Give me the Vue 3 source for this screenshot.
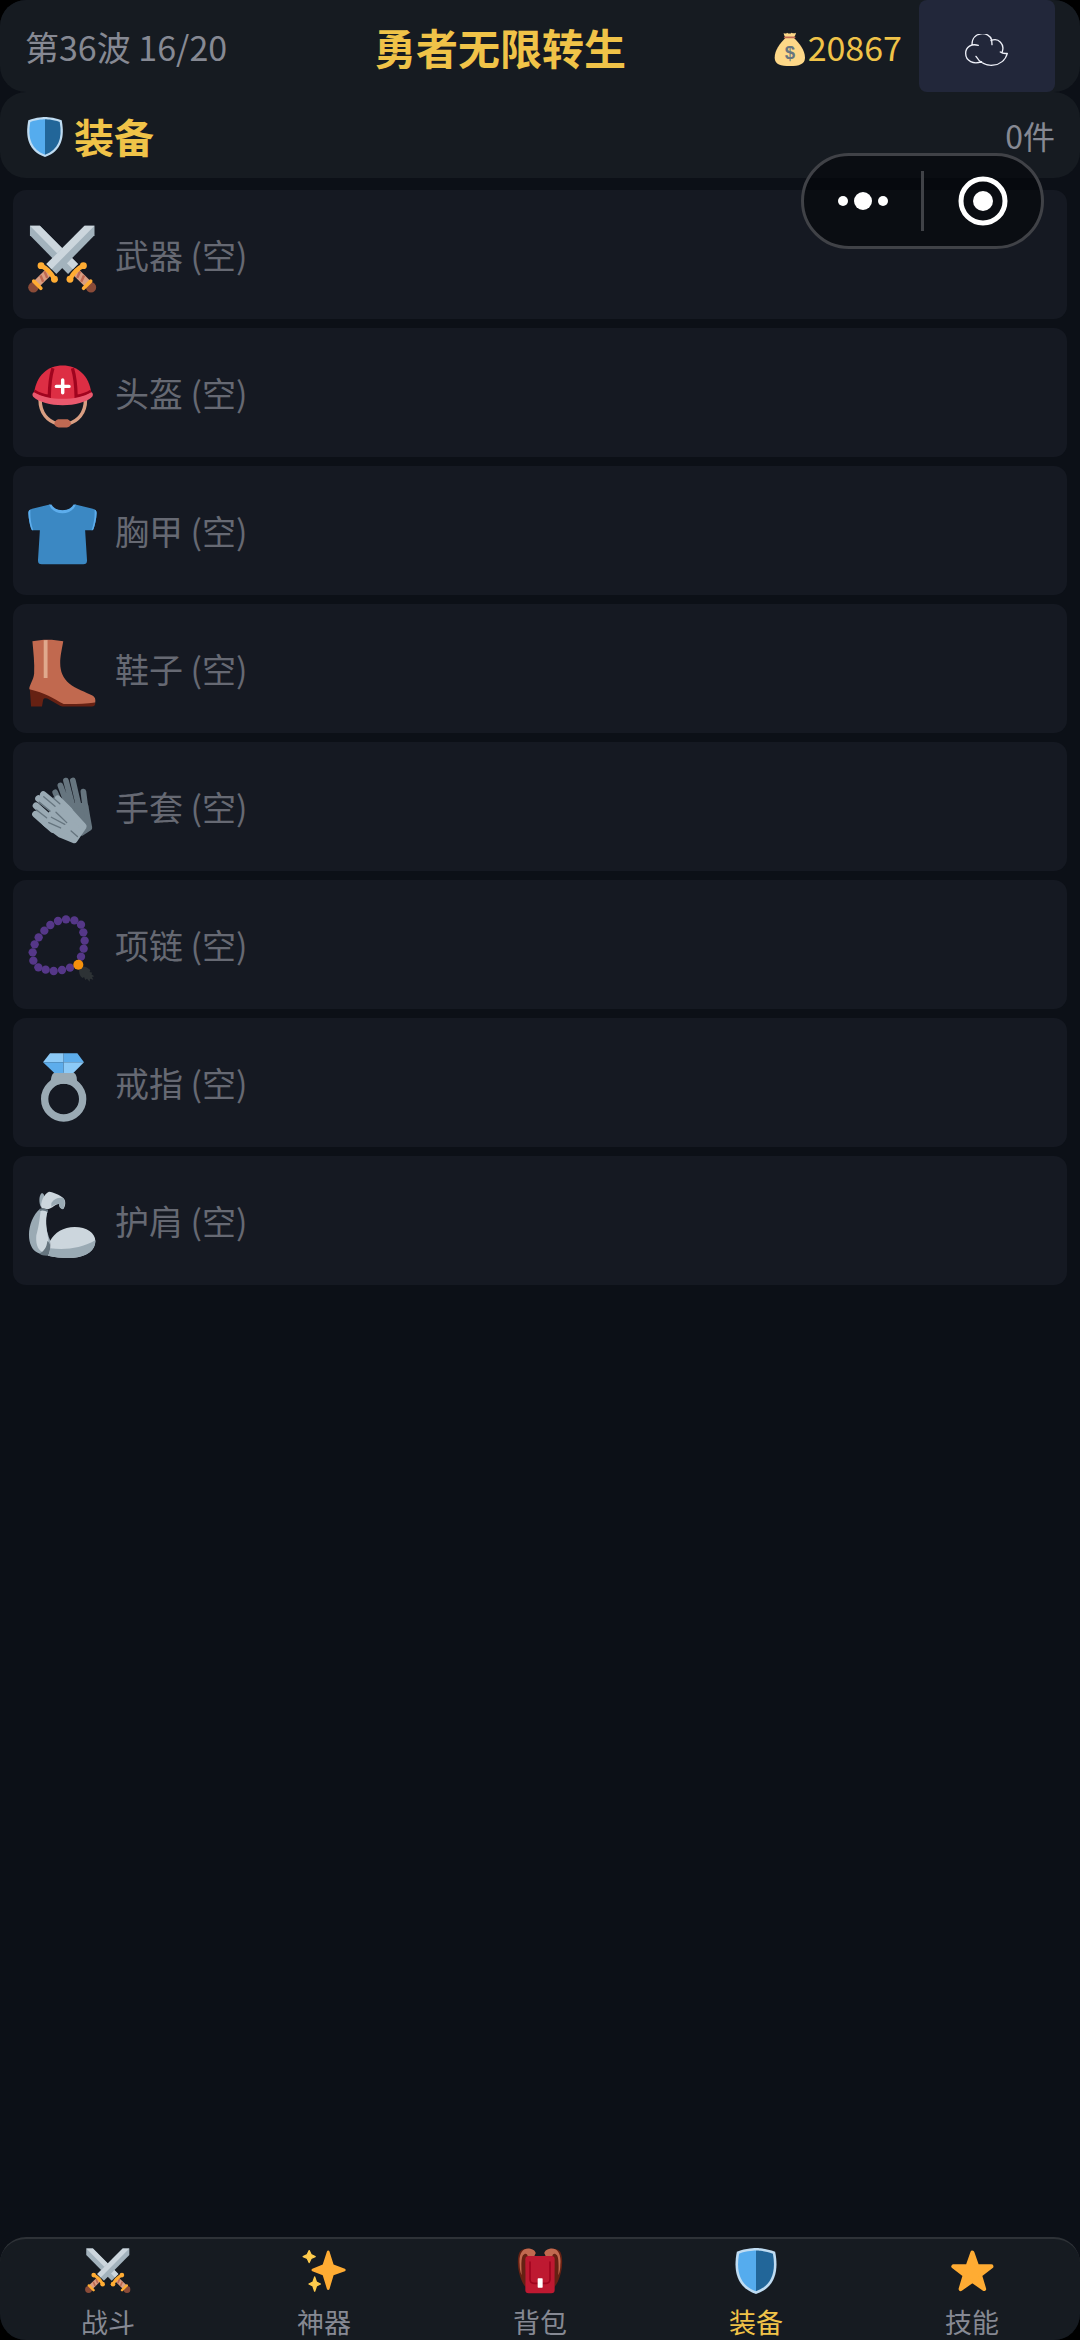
<template>
  <div class="game">
    <!-- Shared symbols, used at more than one size -->
    <svg class="defs" aria-hidden="true">
      <symbol id="sword" viewBox="0 0 36 36">
        <path d="M34.7.4h-5.2L9.600 20.400l5.200 5.200L34.700 5.400z" fill="#a3b3bd" />
        <path d="M34.700.4h-5.200L9.600 20.400l2.700 2.700z" fill="#ccd6dd" />
        <path d="M9 23.400l2.900 2.900-7.100 7-2.900-2.900z" fill="#d99e82" />
        <path d="M8.600 24.200l1.400 3.400M6.500 26.400l1.400 3.200" stroke="#bf6952" stroke-width="1.300" />
        <circle cx="2.800" cy="32.500" r="2.700" fill="#8a4b38" />
        <path d="M3 29.300l3.700 3.700" stroke="#ffac33" stroke-width="1.900" stroke-linecap="round" />
        <path d="M6.800 21.200q4.600 2.200 7 7.100" fill="none" stroke="#ffac33" stroke-width="2.400" />
        <circle cx="6.800" cy="21.200" r="1.800" fill="#ffac33" />
        <circle cx="13.800" cy="28.300" r="1.800" fill="#ffac33" />
      </symbol>
      <symbol id="i-swords" viewBox="0 0 36 36">
        <g transform="translate(35.700 0) scale(-1 1)">
          <use href="#sword" width="36" height="36" />
        </g>
        <use href="#sword" width="36" height="36" />
      </symbol>
      <symbol id="i-shield" viewBox="0 0 36 36">
        <path d="M33 3c-7-3-15-3-15-3S10 0 3 3C0 18 3 31 18 36c15-5 18-18 15-33z" fill="#bfdcf2" />
        <path d="M18 33.884C6.412 29.729 1.961 19.831 4.76 4.444 11.063 2.029 17.928 2 18 2z" fill="#55acee" />
        <path d="M31.24 4.445C25.027 2.066 18.136 2 18 2v31.884c11.588-4.155 16.039-14.053 13.24-29.439z" fill="#226699" />
      </symbol>
      <symbol id="i-sparkles" viewBox="0 0 36 36">
        <path d="M34.3 16.2l-8.8-3.2-3.2-10.3c-.3-1-1.7-1-2 0L17 13l-8.1 3.2c-.9.3-.9 1.6 0 2L17 21.4l3.3 10.7c.3 1 1.700 1 2 0l3.200-10.700 8.800-3.200c.9-.4.9-1.700 0-2z" fill="#ffac33" />
        <path d="M6.400 2l1.500 3.200 3.200 1.500-3.200 1.500-1.500 3.200-1.500-3.200-3.200-1.500 3.200-1.500zM10.700 22.600l1.400 4.100 3.100 1.500-3.100 1.500-1.400 4.100-1.400-4.100-3.100-1.500 3.100-1.500z" fill="#ffcc4d" stroke="#ffcc4d" stroke-linejoin="round" />
      </symbol>
      <symbol id="i-backpack" viewBox="0 0 138 138">
        <path d="M26 118C4 90-4 36 8 12 18-2 46 0 56 14l-8 18H34c-10 18-8 48-8 86z" fill="#662113" />
        <path d="M8 50C4 16 18-2 40 2c10 2 16 8 16 14l-8 16-16-8c-2-8-8-10-14-2-4 8-6 18-4 60C9 70 8 60 8 50z" fill="#c1694f" />
        <path d="M112 118c22-28 30-82 18-106C120-2 92 0 82 14l8 18h14c10 18 8 48 8 86z" fill="#662113" />
        <path d="M130 50c4-34-10-52-32-48-10 2-16 8-16 14l8 16 16-8c2-8 8-10 14-2 4 8 6 18 4 60 5-12 6-22 6-32z" fill="#c1694f" />
        <rect x="25" y="24" width="88" height="112" rx="10" fill="#be1931" />
        <path d="M39 42v52q0 12 12 12h36q12 0 12-12V42" fill="none" stroke="#a0041e" stroke-width="5" stroke-linecap="round" />
        <rect x="62" y="91" width="15" height="28" rx="2" fill="#fff" />
      </symbol>
      <symbol id="i-star" viewBox="0 0 36 36">
        <path d="M18.300 3.600l3.700 10.600 11.200.2-8.900 6.900 3.200 10.800-9.200-6.400-9.200 6.400 3.200-10.800-8.900-6.900 11.200-.2z" fill="#ffac33" stroke="#ffac33" stroke-width="3.200" stroke-linejoin="round" />
      </symbol>
      <symbol id="i-helmet" viewBox="0 0 36 36">
        <path d="M6.300 19c0 7.400 4.200 11.400 9 12.700M30 19c0 7.400-4.200 11.400-9 12.700" fill="none" stroke="#d99e82" stroke-width="1.800" />
        <path d="M16 29.400h4.300c1 0 2.100 1.200 2.100 2.200 0 1.300-1 2-2.100 2H16c-1.200 0-2.200-.7-2.200-2 0-1 1.200-2.200 2.200-2.200z" fill="#bf6952" />
        <path d="M3.200 15.600C4.300 6.500 10.400 1.300 18.100 1.300s13.800 5.200 14.900 14.300L28 20H8z" fill="#dd2e44" />
        <path d="M13 2.700c-1.300 4.300-1.800 9.300-1.900 14.700-3.500-.6-5.800-1.400-7.800-2.800M23.200 2.700c1.300 4.300 1.800 9.300 1.900 14.700 3.500-.6 5.800-1.400 7.800-2.800" fill="none" stroke="#a0041e" stroke-width="1.700" />
        <path d="M3.100 15.300c-.9.400-1 1.600-.4 2.300 3 2.900 9 4.400 15.400 4.400s12.400-1.500 15.400-4.400c.6-.7.500-1.900-.4-2.300-4 2.400-9 3.400-15 3.400s-11-1-15-3.400z" fill="#ea596e" />
        <path d="M18.100 8.900v6.600M14.800 12.200h6.600" stroke="#fff" stroke-width="1.800" stroke-linecap="round" />
      </symbol>
      <symbol id="i-shirt" viewBox="0 0 36 36">
        <path d="M11.300 1.800L2.200 4C.8 4.400.2 5 .2 6.400c.1 3 .7 5.800 1.500 8.200.2.500.5.700 1 .7L6.200 15.200 5.200 31c0 1.400.7 2 2 2h21.600c1.300 0 2-.6 2-2l-1-15.800 3.400.1c.5 0 .8-.2 1-.7.800-2.400 1.500-5.200 1.600-8.200 0-1.400-.6-2-2-2.400l-9.100-2.200C22 6 14 6 11.300 1.800z" fill="#3b88c3" />
        <path d="M11.100 1.800h1.100c2.100 4 9.500 4 11.600 0h1.100c-1.800 6.200-12 6.200-13.800 0zM1.300 4.400C.5 4.800.1 5.400.2 6.400c.1 3 .7 5.800 1.500 8.200.2.500.5.700 1 .7C1.500 11.600 1 8 1.300 4.400zM34.700 4.400c.8.4 1.200 1 1.100 2-.1 3-.8 5.800-1.600 8.200-.2.500-.5.700-1 .7 1.200-3.700 1.800-7.300 1.500-10.900z" fill="#5dadec" />
      </symbol>
      <symbol id="i-boot" viewBox="0 0 36 36">
        <path d="M.9 25.500L1.600 35.200h5.700l.6-3.400c.2-1.200 1.900-1 3.100-.2l5.500 3.100c.7.400 1.200.5 2 .5h14.800c1.300 0 1.900-.7 1.800-1.900z" fill="#662113" />
        <path d="M2.300 1.200c5-1.100 11-1.100 16.100 0-.9 5-1.600 8-1.600 11.300 0 4.500 1.500 8 4.700 10.700 3.500 3 8.500 4.300 12.100 6.300 1.400.8 1.700 1.800 1.500 3.600-6 .8-12 1-16.500.8C13 31 9 28 .7 26.200.6 24 2.900 21.500 3.200 18c.3-5.500-.4-11-.9-16.800z" fill="#c1694f" />
        <path d="M8.200.6l2-.1v19.800h-2z" fill="#e0a98d" />
      </symbol>
      <symbol id="i-gloves" viewBox="0 0 36 36">
        <g stroke="#66757f" stroke-width="3" stroke-linecap="round" stroke-linejoin="round" fill="#66757f">
          <path d="M14.200 8l4 9M16.900 4.400l4 11M19.800 1.900l3.400 13M23.400 1.800l3 13M28.900 7.600l1 8" />
          <path d="M18 15h12l1 6 1 5.500-4 2.600L18 20z" />
        </g>
        <g stroke="#9aaab4" stroke-width="3.500" stroke-linecap="round" stroke-linejoin="round" fill="#9aaab4">
          <path d="M3.900 19.400l9 8M4.200 15l10 9M5.500 11.200l12 9M8 9.200l11 9M15.500 11.400l6 6" />
          <path d="M14 17l6-1 8.900 9.800-4.800 7-7-2.800-8-6z" />
        </g>
        <path d="M4.500 17.200l5.200 4.100M5.800 13.100l5.700 4.700M8.200 10.300l5.900 5M14.600 18.400l5.600 5.400M12.200 21l7 3.700M10.800 23.800l6.200 2.800M22.500 28.200l3.300 2.900M13.200 11l3.400 3" stroke="#66757f" stroke-width=".7" stroke-linecap="round" />
      </symbol>
      <symbol id="i-beads" viewBox="0 0 207 207">
        <path d="M154 158c-2 14 0 24 10 31l4-3 4 9 5-4 8 9 1-9 10 3-4-8 7-2-9-6 3-5-8-2 2-6c-10-9-20-15-33-7z" fill="#2d3235" />
        <circle v-for="(b, i) in beads" :key="i" :cx="b[0]" :cy="b[1]" r="12.500" fill="#553788" />
        <circle cx="151" cy="149" r="15" fill="#f4900c" />
      </symbol>
      <symbol id="i-ring" viewBox="0 0 207 207">
        <path d="M80 59h56q8 2 10 14l2 22H66l4-22q2-12 10-14z" fill="#9aaab4" />
        <circle cx="107" cy="138" r="46" fill="#151922" />
        <circle cx="107" cy="138" r="57" fill="none" stroke="#9aaab4" stroke-width="22" />
        <path d="M66 1h41v27H45z" fill="#8ccaf7" />
        <path d="M107 1h41l20 27h-61zM45 28h62v32H79z" fill="#5dadec" />
        <path d="M107 28h61l-32 32h-29z" fill="#8ccaf7" />
      </symbol>
      <symbol id="i-arm" viewBox="0 0 207 207">
        <path d="M39 8c-6 8-7 28 0 40l10-8-1-28c-2-5-5-7-9-4z" fill="#9aaab4" />
        <path d="M41 52c-6-16 8-46 22-50 14 2 32 10 42 18 10 8 8 26 0 35-8-2-12-8-12-16-10-2-18 12-34 16z" fill="#ccd6dd" />
        <path d="M70 36c10-14 24-18 36-14 8 10 4 24-1 33-8-2-12-8-12-16-8 0-14 2-23 8z" fill="#9aaab4" />
        <path d="M36 54c-30 24-42 80-26 112 6 16 32 30 54 26l4-40C54 120 48 84 60 60z" fill="#9aaab4" />
        <path d="M38 56c4-3 16-2 21 3-8 26-4 54 2 84 2 14-8 32-18 40-16-8-20-28-18-50 6-22 10-44 13-77z" fill="#ccd6dd" />
        <path d="M35 53q12-4 25 4v7q-12-8-25-4z" fill="#66757f" />
        <path d="M58 150c10 6 14 28 6 43-12 2-22 0-30-5 16-8 22-20 24-38z" fill="#66757f" />
        <path d="M66 150c14-26 40-42 74-42 36 0 62 18 62 42 0 28-28 48-66 50-24 1-50 0-76-6 6-8 8-24 6-44z" fill="#ccd6dd" />
        <path d="M66 172c48 6 92 0 136-24 2 30-26 50-66 52-24 1-50 0-76-6 4-6 6-12 6-22z" fill="#9aaab4" />
      </symbol>
    </svg>

    <header class="topbar">
      <span class="wave">第36波 16/20</span>
      <h1 class="title">勇者无限转生</h1>
      <div class="topbar-right">
        <span class="coins">
          <svg class="coin-icon" viewBox="0 0 105 105" aria-hidden="true">
            <path d="M32 3q7 4 10-1 8 5 14 0 6 4 13 0-1 8-6 14H37q-5-6-5-13z" fill="#fdd888" />
            <path d="M37 18C20 36 5 54 5 78c1 20 18 24 46 24s44-5 45-24c0-24-17-44-33-60z" fill="#fdd888" />
            <path d="M35 16h30" stroke="#bf6952" stroke-width="5" stroke-linecap="round" />
            <text x="51" y="81" class="coin-sign">$</text>
          </svg>
          <span>20867</span>
        </span>
        <button class="cloud-btn" type="button" aria-label="云存档">
          <svg class="cloud-icon" viewBox="0 0 129 96" aria-hidden="true">
            <path d="M40 34C20 28 2 38 2 58c0 24 24 34 48 25M21 32C21-8 72-10 80 18l1 14M78 20c22-10 43 10 33 36M106 54q8 6 21 4C115 102 55 106 33 67" />
          </svg>
        </button>
      </div>
    </header>

    <div class="section-bar">
      <h2 class="section-title">
        <svg class="section-icon" aria-hidden="true"><use href="#i-shield" /></svg>
        装备
      </h2>
      <span class="section-count">0件</span>
    </div>

    <ul class="slots">
      <li v-for="s in slots" :key="s.icon" class="slot">
        <svg class="slot-icon" aria-hidden="true"><use :href="'#i-' + s.icon" /></svg>
        <span class="slot-name">{{ s.name }} (空)</span>
      </li>
    </ul>

    <nav class="tabbar">
      <button
        v-for="t in tabs"
        :key="t.icon"
        type="button"
        class="tab"
        :class="{ active: t.icon === current }"
        @click="current = t.icon"
      >
        <svg class="tab-icon" aria-hidden="true"><use :href="'#i-' + t.icon" /></svg>
        <span>{{ t.label }}</span>
      </button>
    </nav>

    <!-- Floating mini-program menu -->
    <div class="capsule">
      <button type="button" class="capsule-btn" aria-label="更多">
        <svg width="52" height="20" viewBox="0 0 52 20" aria-hidden="true">
          <circle cx="6" cy="10" r="5" />
          <circle cx="26" cy="10" r="9" />
          <circle cx="46" cy="10" r="5" />
        </svg>
      </button>
      <span class="capsule-line" />
      <button type="button" class="capsule-btn" aria-label="关闭">
        <svg width="50" height="50" viewBox="0 0 50 50" aria-hidden="true">
          <circle cx="25" cy="25" r="22" fill="none" stroke="#fff" stroke-width="5" />
          <circle cx="25" cy="25" r="10" />
        </svg>
      </button>
    </div>
  </div>
</template>

<script setup>
import { ref } from 'vue'

const current = ref('shield')

const slots = [
  { icon: 'swords', name: '武器' },
  { icon: 'helmet', name: '头盔' },
  { icon: 'shirt', name: '胸甲' },
  { icon: 'boot', name: '鞋子' },
  { icon: 'gloves', name: '手套' },
  { icon: 'beads', name: '项链' },
  { icon: 'ring', name: '戒指' },
  { icon: 'arm', name: '护肩' },
]

const tabs = [
  { icon: 'swords', label: '战斗' },
  { icon: 'sparkles', label: '神器' },
  { icon: 'backpack', label: '背包' },
  { icon: 'shield', label: '装备' },
  { icon: 'star', label: '技能' },
]

const beads = [
  [114, 13], [139, 16], [159, 29], [166, 52], [170, 77], [167, 101], [159, 125],
  [126, 158], [102, 165], [77, 168], [53, 164], [31, 157], [16, 137], [14, 112],
  [20, 88], [32, 67], [49, 47], [67, 30], [90, 18],
]
</script>

<style>
body {
  margin: 0;
  background: #000;
}
</style>

<style scoped>
.game {
  position: relative;
  display: flex;
  flex-direction: column;
  min-height: 100vh;
  box-sizing: border-box;
  background: #0c1017;
  border-radius: 26px;
  font-family: 'Noto Sans CJK SC', sans-serif;
  color: #868993;
}

.defs {
  position: absolute;
  width: 0;
  height: 0;
}

button {
  margin: 0;
  padding: 0;
  border: 0;
  background: none;
  font: inherit;
  color: inherit;
}

/* ── Top bars ───── */
.topbar,
.section-bar {
  display: flex;
  align-items: center;
  justify-content: space-between;
  padding: 0 25px;
  background: #161b21;
  border-radius: 26px;
}

.topbar {
  height: 92px;
}

.wave,
.coins {
  padding-top: 2px;
  font-size: 34px;
  line-height: 50px;
}

.title {
  margin: 0;
  padding-top: 2px;
  font-size: 42px;
  line-height: 60px;
  font-weight: 700;
  color: #f0c348;
}

.topbar-right {
  display: flex;
  align-items: center;
  gap: 17px;
}

.coins {
  display: flex;
  align-items: center;
  color: #f0c348;
}

.coin-icon {
  width: 35px;
  height: 35px;
  margin-top: 4px;
}

.coin-sign {
  font-family: 'Liberation Sans', sans-serif;
  font-size: 56px;
  font-weight: 700;
  text-anchor: middle;
  fill: #67757f;
}

.cloud-btn {
  display: flex;
  align-items: center;
  justify-content: center;
  width: 136px;
  height: 92px;
  background: #22273a;
  border-radius: 8px;
}

.cloud-icon {
  width: 43px;
  height: 32px;
  margin-top: 8px;
  fill: none;
  stroke: #eef0f8;
  stroke-width: 4;
  stroke-linecap: round;
  stroke-linejoin: round;
}

.section-bar {
  height: 86px;
}

.section-title {
  display: flex;
  align-items: center;
  gap: 9px;
  margin: 0;
  padding-top: 2px;
  font-size: 40px;
  line-height: 58px;
  font-weight: 700;
  color: #f0c348;
}

.section-icon {
  width: 40px;
  height: 40px;
  margin-top: 2px;
}

.section-count {
  font-size: 32px;
  line-height: 48px;
}

/* ── Equipment slots ───── */
.slots {
  display: flex;
  flex-direction: column;
  gap: 9px;
  margin: 0;
  padding: 12px 13px;
  list-style: none;
}

.slot {
  display: flex;
  align-items: center;
  gap: 18px;
  height: 129px;
  padding: 0 15px;
  background: #151922;
  border-radius: 13px;
}

.slot-icon {
  width: 69px;
  height: 69px;
  margin-top: 10px;
}

.slot-name {
  font-size: 34px;
  line-height: 50px;
  color: #666973;
}

/* ── Bottom tabs ───── */
.tabbar {
  display: flex;
  margin-top: auto;
  padding: 9px 0 1px;
  background: #161b21;
  border-top: 2px solid #2e3237;
  border-radius: 26px;
}

.tab {
  flex: 1;
  display: flex;
  flex-direction: column;
  align-items: center;
  gap: 11px;
  font-size: 27px;
  line-height: 34px;
}

.tab.active {
  color: #f0c348;
}

.tab-icon {
  width: 46px;
  height: 46px;
}

/* ── Capsule ───── */
.capsule {
  position: absolute;
  top: 153px;
  right: 36px;
  display: flex;
  align-items: center;
  width: 243px;
  height: 96px;
  box-sizing: border-box;
  border: 3px solid #404247;
  border-radius: 48px;
  background: rgba(4, 5, 8, 0.6);
}

.capsule-btn {
  flex: 1;
  display: flex;
  align-items: center;
  justify-content: center;
  height: 100%;
}

.capsule-btn svg {
  fill: #fff;
}

.capsule-line {
  width: 3px;
  height: 60px;
  background: #404247;
}
</style>
